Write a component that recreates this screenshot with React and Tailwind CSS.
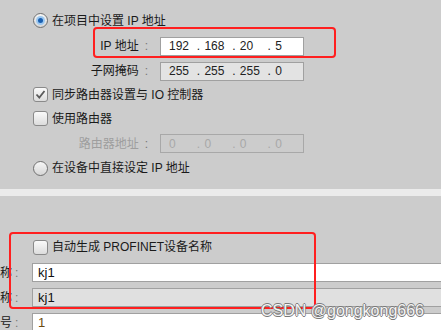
import React from "react";

const FONT = "font-['Liberation_Sans','Noto_Sans_CJK_SC',sans-serif]";

function Radio({ checked }) {
  return (
    <div className="w-[15px] h-[15px] rounded-full border border-[#707070] bg-[linear-gradient(180deg,#f6f6f6,#d6d6d6)] flex items-center justify-center shrink-0">
      {checked && (
        <div className="w-[9px] h-[9px] rounded-full bg-[#9cc8f0] flex items-center justify-center">
          <div className="w-[5px] h-[5px] rounded-full bg-[#1a5fb0]" />
        </div>
      )}
    </div>
  );
}

function Check({ checked }) {
  return (
    <div className="w-[15px] h-[15px] rounded-[3px] border border-[#8a8a8a] bg-[linear-gradient(180deg,#fafafa,#dcdcdc)] flex items-center justify-center shrink-0">
      {checked && (
        <svg width="11" height="11" viewBox="0 0 11 11">
          <path d="M1.5 5.5 L4.3 8.5 L9.5 2" fill="none" stroke="#5a5a5a" strokeWidth="1.8" />
        </svg>
      )}
    </div>
  );
}

function IpBox({ values, bg, disabled }) {
  const color = disabled ? "text-[#a8a8a8]" : "text-[#222]";
  return (
    <div
      className={`ml-[12px] w-[144px] h-[19px] border ${disabled ? "border-[#a8a8a8]" : "border-[#a0a0a0]"} ${bg} flex items-center pl-[8px] text-[12px] ${color}`}
    >
      {values.map((v, i) => (
        <React.Fragment key={i}>
          {i > 0 && <span className="w-[8px]">.</span>}
          <span className="w-[29px]">{v}</span>
        </React.Fragment>
      ))}
    </div>
  );
}

function Label({ children, grey }) {
  return (
    <div className={`w-[148px] flex justify-end items-center whitespace-nowrap ${grey ? "text-[#9e9e9e]" : "text-[#1a1a1a]"}`}>
      <span>{children}</span>
      <span className="ml-[6px] text-[#777]">:</span>
    </div>
  );
}

function FieldRow({ label, value, bg, valueColor }) {
  return (
    <div className="flex items-center h-[19px]">
      <div className="w-[32px] flex items-center whitespace-nowrap text-[#1a1a1a]">
        <span>{label}</span>
        <span className="ml-[3px] text-[#777]">:</span>
      </div>
      <div className={`flex-1 mr-[-3px] h-[19px] border border-[#a0a0a0] ${bg} flex items-center pl-[5px] text-[13px] ${valueColor || "text-[#111]"}`}>
        {value}
      </div>
    </div>
  );
}

export default function App() {
  return (
    <div className={`relative w-[441px] h-[330px] overflow-hidden bg-[#cccccc] ${FONT} text-[12px] text-[#1a1a1a]`}>
      {/* Top section */}
      <div className="pt-[8px] pb-[9px]">
        <div className="h-[25px] flex items-center pl-[33px] gap-[4px]">
          <Radio checked />
          <span>在项目中设置 IP 地址</span>
        </div>
        <div className="h-[26px] flex items-center">
          <Label>IP 地址</Label>
          <IpBox values={["192", "168", "20", "5"]} bg="bg-white" />
        </div>
        <div className="h-[24px] flex items-center">
          <Label>子网掩码</Label>
          <IpBox values={["255", "255", "255", "0"]} bg="bg-[#e3e3e3]" />
        </div>
        <div className="h-[23px] flex items-center pl-[33px] gap-[4px]">
          <Check checked />
          <span>同步路由器设置与 IO 控制器</span>
        </div>
        <div className="h-[25px] flex items-center pl-[33px] gap-[4px]">
          <Check />
          <span>使用路由器</span>
        </div>
        <div className="h-[25px] flex items-center">
          <Label grey>路由器地址</Label>
          <IpBox values={["0", "0", "0", "0"]} bg="bg-[#cccccc]" disabled />
        </div>
        <div className="h-[24px] flex items-center pl-[33px] gap-[4px]">
          <Radio />
          <span>在设备中直接设定 IP 地址</span>
        </div>
      </div>

      {/* Separator band */}
      <div className="h-[7px] bg-[#ebebeb]" />

      {/* Bottom section */}
      <div className="pt-[39px]">
        <div className="h-[24px] flex items-center pl-[33px] gap-[4px]">
          <Check />
          <span>自动生成 PROFINET设备名称</span>
        </div>
        <div className="mt-[4px] flex flex-col gap-[6px]">
          <FieldRow label="称" value="kj1" bg="bg-white" />
          <FieldRow label="称" value="kj1" bg="bg-[#e0e0e0]" />
          <FieldRow label="号" value="1" bg="bg-white" valueColor="text-[#6b4a10]" />
        </div>
      </div>

      {/* Red highlight boxes */}
      <div className="absolute left-[93px] top-[27px] w-[243px] h-[31px] border-2 border-[#ff1f1f] rounded-[4px]" />
      <div className="absolute left-[9px] top-[232px] w-[307px] h-[77px] border-2 border-[#ff1f1f] rounded-[4px]" />

      {/* Watermark */}
      <div className="absolute left-[261px] top-[303px] text-[16px] leading-none font-['Liberation_Sans',sans-serif] text-[#f4f4f4] [text-shadow:0.8px_0_#7a7a7a,-0.8px_0_#7a7a7a,0_0.8px_#7a7a7a,0_-0.8px_#7a7a7a] whitespace-nowrap">
        CSDN @gongkong666
      </div>
    </div>
  );
}
